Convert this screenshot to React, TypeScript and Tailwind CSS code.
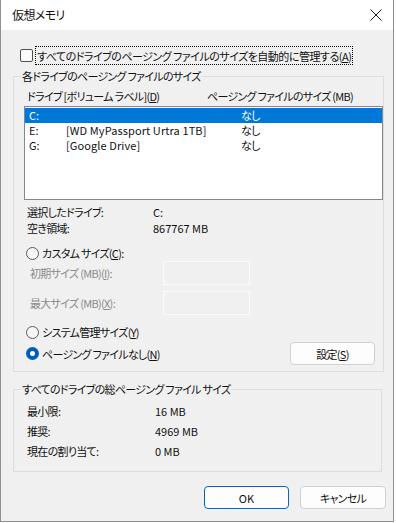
import React from 'react';

type Drive = {
  letter: string;
  label: string;
  size: string;
  selected?: boolean;
};

const drives: Drive[] = [
  { letter: 'C:', label: '', size: 'なし', selected: true },
  { letter: 'E:', label: '[WD MyPassport Urtra 1TB]', size: 'なし' },
  { letter: 'G:', label: '[Google Drive]', size: 'なし' },
];

const totals = [
  { label: '最小限:', value: '16 MB' },
  { label: '推奨:', value: '4969 MB' },
  { label: '現在の割り当て:', value: '0 MB' },
];

const Radio: React.FC<{ checked?: boolean }> = ({ checked }) =>
  checked ? (
    <span className="flex h-[13px] w-[13px] shrink-0 items-center justify-center rounded-full bg-[#005fb8]">
      <span className="h-[5px] w-[5px] rounded-full bg-white" />
    </span>
  ) : (
    <span className="h-[13px] w-[13px] shrink-0 rounded-full border border-[#5a5a5a] bg-[#f6f6f6]" />
  );

const App: React.FC = () => {
  return (
    <div className="h-[523px] w-[396px] whitespace-nowrap bg-white font-['Noto_Sans_CJK_JP',sans-serif] text-[11px] leading-[16px] tracking-[-0.7px] text-[#111] [font-feature-settings:'palt']">
      <div className="flex h-[522px] w-[394px] flex-col border-x border-b border-[#8f8f8f]">
        {/* title bar */}
        <div className="flex h-[30px] shrink-0 items-center justify-between bg-white pl-[11px] pr-[11px]">
          <span className="text-[12px] tracking-[-0.6px]">仮想メモリ</span>
          <svg width="12" height="12" viewBox="0 0 12 12" className="text-[#1a1a1a]">
            <path d="M0.5 0.5L11.5 11.5M11.5 0.5L0.5 11.5" stroke="currentColor" strokeWidth="1" />
          </svg>
        </div>

        <div className="flex-1 bg-[#f0f0f0] pl-[12px]">
          <div className="mt-[16px] flex h-[19px] items-center">
            <span className="ml-[7px] h-[13px] w-[13px] rounded-[2px] border border-[#4f4f4f] bg-[#fbfbfb]" />
            <span className="ml-[2px] flex h-[19px] items-center border border-dotted border-black px-[1px] tracking-[-0.5px]">
              すべてのドライブのページング ファイルのサイズを自動的に管理する(<u>A</u>)
            </span>
          </div>

          <fieldset className="mt-[3px] w-[369px] border border-[#dcdcdc] pb-[6px]">
            <legend className="ml-[7px] px-[1px]">各ドライブのページング ファイルのサイズ</legend>

            <div className="mt-[4px] grid h-[16px] grid-cols-[180px_1fr] pl-[13px]">
              <span>
                ドライブ [ボリューム ラベル](<u>D</u>)
              </span>
              <span>ページング ファイルのサイズ (MB)</span>
            </div>

            <div className="ml-[10px] mt-[2px] h-[94px] w-[359px] border border-[#828790] bg-white pt-[1px]">
              {drives.map(d => (
                <div
                  key={d.letter}
                  className={
                    d.selected
                      ? 'grid h-[15px] grid-cols-[37px_175px_1fr] bg-[#0078d7] pl-[4px] leading-[15px] text-white'
                      : 'grid h-[15px] grid-cols-[37px_175px_1fr] pl-[4px] leading-[15px]'
                  }
                >
                  <span className="tracking-normal">{d.letter}</span>
                  <span className="tracking-[0.1px]">{d.label}</span>
                  <span>{d.size}</span>
                </div>
              ))}
            </div>

            <div className="mt-[4px] grid grid-cols-[126px_1fr] pl-[13px]">
              <span className="h-[16px]">選択したドライブ:</span>
              <span className="tracking-normal">C:</span>
              <span className="h-[16px]">空き領域:</span>
              <span className="tracking-normal">867767 MB</span>
            </div>

            <div className="mt-[9px] flex h-[16px] items-center gap-[3px] pl-[12px]">
              <Radio />
              <span>
                カスタム サイズ(<u>C</u>):
              </span>
            </div>

            <div className="flex h-[24px] items-center text-[#8a8a8a]">
              <span className="w-[149px] pl-[16px]">
                初期サイズ (MB)(<u>I</u>):
              </span>
              <span className="h-[24px] w-[87px] border border-[#fbfbfb]" />
            </div>
            <div className="mt-[6px] flex h-[24px] items-center text-[#8a8a8a]">
              <span className="w-[149px] pl-[16px]">
                最大サイズ (MB)(<u>X</u>):
              </span>
              <span className="h-[24px] w-[87px] border border-[#fbfbfb]" />
            </div>

            <div className="mt-[9px] flex h-[16px] items-center gap-[3px] pl-[12px]">
              <Radio />
              <span>
                システム管理サイズ(<u>Y</u>)
              </span>
            </div>

            <div className="mt-[2px] flex h-[23px] items-center justify-between pl-[12px] pr-[8px]">
              <div className="flex items-center gap-[3px]">
                <Radio checked />
                <span>
                  ページング ファイルなし(<u>N</u>)
                </span>
              </div>
              <button className="flex h-[23px] w-[85px] items-center justify-center rounded-[4px] border border-[#d0d0d0] bg-[#fdfdfd]">
                設定(<u>S</u>)
              </button>
            </div>
          </fieldset>

          <fieldset className="mt-[9px] w-[369px] border border-[#dcdcdc] pb-[10px]">
            <legend className="ml-[7px] px-[1px]">すべてのドライブの総ページング ファイル サイズ</legend>
            <div className="mt-[4px] grid grid-cols-[128px_1fr] pl-[13px]">
              {totals.map(t => (
                <React.Fragment key={t.label}>
                  <span className="flex h-[20px] items-center">{t.label}</span>
                  <span className="flex h-[20px] items-center tracking-normal">{t.value}</span>
                </React.Fragment>
              ))}
            </div>
          </fieldset>

          <div className="mt-[14px] flex justify-end gap-[11px] pr-[7px]">
            <button className="flex h-[23px] w-[85px] items-center justify-center rounded-[4px] border border-[#0067c0] bg-[#fdfdfd] tracking-normal">
              OK
            </button>
            <button className="flex h-[23px] w-[86px] items-center justify-center rounded-[4px] border border-[#d0d0d0] bg-[#fdfdfd]">
              キャンセル
            </button>
          </div>
        </div>
      </div>
    </div>
  );
};

export default App;
